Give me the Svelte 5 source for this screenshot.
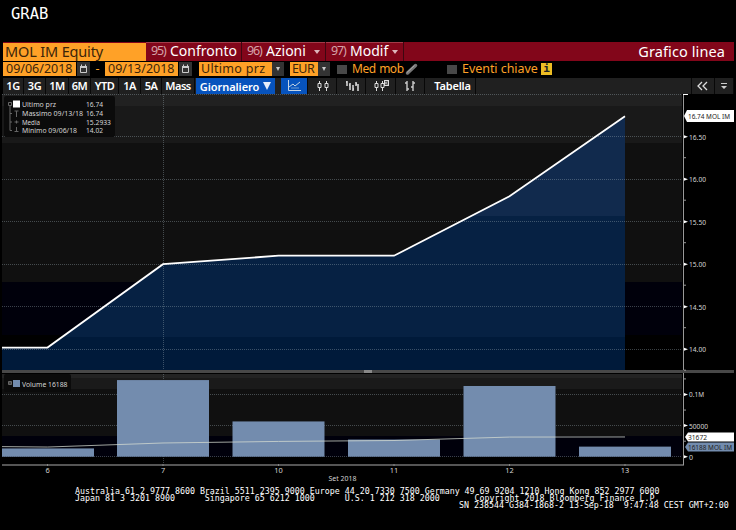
<script lang="ts">
  type Point = { day: string; x: number; price: number; volume: number; average: number };

  const points: Point[] = [
    { day: '6', x: 47.5, price: 14.02, volume: 13300, average: 15500 },
    { day: '7', x: 163, price: 15.0, volume: 123000, average: 22000 },
    { day: '10', x: 278.5, price: 15.1, volume: 56600, average: 24500 },
    { day: '11', x: 394, price: 15.1, volume: 27500, average: 26000 },
    { day: '12', x: 509.5, price: 15.8, volume: 113500, average: 31500 },
    { day: '13', x: 625, price: 16.74, volume: 16188, average: 31672 },
  ];

  const ranges = [
    { label: '1G', width: 21 },
    { label: '3G', width: 22 },
    { label: '1M', width: 23 },
    { label: '6M', width: 22 },
    { label: 'YTD', width: 28 },
    { label: '1A', width: 22 },
    { label: '5A', width: 21 },
    { label: 'Mass', width: 33 },
  ];

  const menus = [
    { key: '95)', label: 'Confronto', width: 96, arrow: false },
    { key: '96)', label: 'Azioni', width: 84, arrow: true },
    { key: '97)', label: 'Modif', width: 78, arrow: true },
  ];

  const stats = [
    { label: 'Ultimo prz', value: '16.74', width: 34, valueWidth: 17 },
    { label: 'Massimo 09/13/18', value: '16.74', width: 61, valueWidth: 17 },
    { label: 'Media', value: '15.2933', width: 18, valueWidth: 25 },
    { label: 'Minimo 09/06/18', value: '14.02', width: 55, valueWidth: 17 },
  ];

  const priceTicks = [16.5, 16, 15.5, 15, 14.5, 14];
  const volumeTicks = [
    { value: 100000, label: '0.1M', width: 15 },
    { value: 50000, label: '50000', width: 19 },
    { value: 0, label: '0', width: 4 },
  ];

  const priceY = (value: number) => 42.7 + (16.5 - value) * 85;
  const volumeY = (value: number) => 362.7 - value * 0.000623;

  const pricePath = 'M2 253.6 ' + points.map((p) => `L${p.x} ${priceY(p.price)}`).join(' ');
  const areaPath = pricePath + ' V276 H2 Z';
  const averagePath = 'M2 352.6 ' + points.map((p) => `L${p.x} ${volumeY(p.average)}`).join(' ');
</script>

{#snippet calendar()}
  <span class="calendar">
    <svg width="13" height="14" viewBox="0 0 13 14">
      <path d="M3.500 4.500h6v6h-6z" fill="none" stroke="#ccc" />
      <path d="M3 4h7v2H3zM4 2.500h1V4H4zM8 2.500h1V4H8z" fill="#ccc" />
    </svg>
  </span>
{/snippet}

<div class="terminal">
  <div class="command">GRAB</div>

  <header class="title">
    <span class="ticker">MOL IM Equity</span>
    {#each menus as menu}
      <span class="menu" style:width="{menu.width}px">
        <span class="key">{menu.key}</span>
        <span class="name">{menu.label}</span>
        {#if menu.arrow}<i></i>{/if}
      </span>
    {/each}
    <span class="function">Grafico linea</span>
  </header>

  <div class="filters">
    <span class="date">09/06/2018</span>
    {@render calendar()}
    <span class="dash">-</span>
    <span class="date">09/13/2018</span>
    {@render calendar()}
    <span class="select price">Ultimo prz</span>
    <span class="drop"></span>
    <span class="select currency">EUR</span>
    <span class="drop"></span>
    <span class="check"></span>
    <span class="label average">Med mob</span>
    <svg class="pencil" width="15" height="14" viewBox="0 0 15 14">
      <path d="M3.500 11 11.500 3.500" stroke="#777" stroke-width="3.500" stroke-linecap="round" />
      <path d="M3 10.500 10.500 3.500" stroke="#aaa" stroke-width="1" />
    </svg>
    <span class="check second"></span>
    <span class="label events">Eventi chiave</span>
    <span class="info">i</span>
  </div>

  <nav class="toolbar">
    {#each ranges as range}
      <span class="range" style:width="{range.width}px">{range.label}</span>
    {/each}
    <span class="period">Giornaliero <i></i></span>
    <span class="tool active">
      <svg width="26" height="16" fill="none" stroke="#c5d4e4">
        <path d="M7.500 2v10.500H20" /><path d="m8 9 4-3 2 2 5-4" /><path d="M10 10h8" stroke="#6f9bd0" />
      </svg>
    </span>
    <span class="tool">
      <svg width="28" height="16" fill="none" stroke="#ddd">
        <path d="M11.500 3v2m0 5v3M18.500 3v2m0 5v3M10 5.500h3v4h-3zM17 5.500h3v4h-3z" />
      </svg>
    </span>
    <span class="tool">
      <svg width="28" height="16" fill="none" stroke="#ddd" stroke-width="1.500">
        <path d="M10 3v5M13 5v7M16 7v6M19 4v4M21 6v7" /><path d="M9 4h1M12 7h1M16 11h1M19 6h1" />
      </svg>
    </span>
    <span class="tool">
      <svg width="29" height="16" fill="none" stroke="#ddd">
        <path d="M10.500 3v2m0 5v3M16.500 3v2m0 5v3M9 5.500h3v4H9zM15 5.500h3v4h-3z" />
        <path d="M18 2h5v6h-5z" fill="#ddd" stroke="none" /><path d="M19 3.500h2.500v3H19M19 5h2" stroke="#333" stroke-width=".8" />
      </svg>
    </span>
    <span class="tool">
      <svg width="28" height="16" fill="none" stroke="#ccc" stroke-width="1.400">
        <path d="M11 3v10M9 5h2M11 11h2M17 3v10M15 9h2M17 5h2" />
      </svg>
    </span>
    <span class="table">Tabella</span>
    <span class="space"></span>
    <span class="tool">
      <svg width="22" height="16" fill="none" stroke="#ddd" stroke-width="1.300">
        <path d="m10 4-4 4 4 4M15 4l-4 4 4 4" />
      </svg>
    </span>
    <span class="tool">
      <svg width="18" height="16"><path d="M6 5h6v1H6zM6 8h6l-3 3z" fill="#ccc" /></svg>
    </span>
  </nav>

  <svg class="chart" width="736" height="391" viewBox="0 0 736 391">
    <g class="bands" shape-rendering="crispEdges">
      <rect x="2" y="0" width="680" height="12" fill="#212121" />
      <rect x="2" y="12" width="680" height="37" fill="#191919" />
      <rect x="2" y="49" width="680" height="139" fill="#101010" />
      <rect x="2" y="188" width="680" height="53" fill="#00000b" />
      <rect x="2" y="280" width="680" height="4" fill="#232323" />
      <rect x="2" y="284" width="680" height="11" fill="#1a1a1a" />
      <rect x="2" y="295" width="680" height="47" fill="#101010" />
      <rect x="2" y="342" width="680" height="21" fill="#00000b" />
    </g>

    <clipPath id="area"><path d={areaPath} /></clipPath>
    <g clip-path="url(#area)">
      <rect width="626" height="122" fill="#112a4d" />
      <rect y="122" width="626" height="121" fill="#062143" />
      <rect y="243" width="626" height="34" fill="#001a3a" />
    </g>

    <g class="grid">
      <path d="M2 .5H682" />
      {#each priceTicks as tick}
        <path d="M2 {Math.floor(priceY(tick)) + 0.5}H682" />
      {/each}
      {#each volumeTicks as tick}
        <path d="M2 {Math.floor(volumeY(tick.value)) + 0.5}H682" />
      {/each}
      <path d="M163.5 0V371" />
    </g>

    <path d={pricePath} fill="none" stroke="#fff" stroke-width="1.8" />

    {#each points as point, i}
      <rect
        x={i === 0 ? 2 : point.x - 46}
        y={volumeY(point.volume)}
        width="92"
        height={volumeY(0) - volumeY(point.volume)}
        fill="#738cae"
      />
    {/each}
    <path d={averagePath} fill="none" stroke="#d5dcd2" stroke-opacity=".75" />

    <rect x="2" y="276" width="732" height="3" fill="#484848" />
    <rect x="364" y="276" width="8" height="3" fill="#888" />
    <path d="M2 371H684" stroke="#555" stroke-width="2" />
    <path d="M683.5 0V276M683.5 279V371" stroke="#999" />
    <path d="M683 .5h5" stroke="#fff" />

    <g class="axis">
      {#each priceTicks as tick}
        <path d="M684 {priceY(tick) - 1.5}l4 1.5-4 1.5z" fill="#fff" />
        <path d="M684 {priceY(tick) + 21}h2" stroke="#999" />
        <text x="689" y={priceY(tick) + 3} textLength="17" lengthAdjust="spacingAndGlyphs">{tick.toFixed(2)}</text>
      {/each}
      {#each volumeTicks as tick}
        <path d="M684 {volumeY(tick.value) - 1.5}l4 1.5-4 1.5z" fill="#fff" />
        <path d="M684 {volumeY(tick.value) - 15.5}h2" stroke="#999" />
        <text x="689" y={volumeY(tick.value) + 3} textLength={tick.width} lengthAdjust="spacingAndGlyphs">{tick.label}</text>
      {/each}
      {#each points as point}
        <path d="M{point.x} 370v2" stroke="#888" />
        <text x={point.x} y="379" text-anchor="middle">{point.day}</text>
      {/each}
      <text x="328.500" y="387" textLength="28" lengthAdjust="spacingAndGlyphs">Set 2018</text>
    </g>

    <g class="flags">
      <path d="M684 22l3-6h47v12h-47z" fill="#fff" />
      <text x="688" y="25" textLength="42" lengthAdjust="spacingAndGlyphs">16.74 MOL IM</text>
      <path d="M685 343l3-4.500h46v9h-46z" fill="#fff" />
      <text x="688" y="346" textLength="19" lengthAdjust="spacingAndGlyphs">31672</text>
      <path d="M685 353l3-4.500h46v9h-46z" fill="#738cae" />
      <text x="688" y="356" textLength="44" lengthAdjust="spacingAndGlyphs">16188 MOL IM</text>
    </g>

    <g class="legend">
      <rect x="4" y="2" width="111" height="41" rx="2" fill="#0b0b0b" />
      <rect x="13" y="6.500" width="7" height="7" fill="#fff" />
      <path d="M8.500 8.500h3v3h-3zM10 12v24.500h2M10 19.500h2M10 28h2M14.500 17h4M16.500 17v6M14.500 28h4M16.500 26.500v3M16.500 33v5M14.500 37.500h4" fill="none" stroke="#666" />
      {#each stats as stat, i}
        <text x="22" y={13.3 + i * 8.7} textLength={stat.width} lengthAdjust="spacingAndGlyphs">{stat.label}</text>
        <text x="86" y={13.3 + i * 8.7} textLength={stat.valueWidth} lengthAdjust="spacingAndGlyphs">{stat.value}</text>
      {/each}
      <rect x="4" y="280" width="67" height="18" rx="2" fill="#0b0b0b" />
      <path d="M8.500 287.500h3v3h-3z" fill="#444" stroke="#666" />
      <rect x="13" y="286" width="7" height="7" fill="#738cae" />
      <text x="22" y="292.500" textLength="45.500" lengthAdjust="spacingAndGlyphs">Volume 16188</text>
    </g>
  </svg>

  <footer>
    <pre>Australia 61 2 9777 8600 Brazil 5511 2395 9000 Europe 44 20 7330 7500 Germany 49 69 9204 1210 Hong Kong 852 2977 6000
Japan 81 3 3201 8900      Singapore 65 6212 1000      U.S. 1 212 318 2000       Copyright 2018 Bloomberg Finance L.P.</pre>
    <pre class="serial">SN 238544 G384-1868-2 13-Sep-18  9:47:48 CEST GMT+2:00</pre>
  </footer>
</div>

<style>
  :global(body) {
    background: #000;
    overflow: hidden;
  }

  .terminal {
    width: 736px;
    height: 530px;
    background: #000;
    color: #fff;
    font-family: 'Noto Sans', sans-serif;
    white-space: nowrap;
  }

  svg {
    display: block;
  }

  .command {
    height: 42px;
    padding: 4px 0 0 11px;
    box-sizing: border-box;
    font: 15.5px/20px 'DejaVu Sans Mono', monospace;
  }

  .title {
    display: flex;
    width: 731px;
    height: 19px;
    margin-left: 3px;
    background: #82061a;
  }

  .ticker {
    width: 143px;
    height: 18px;
    margin-top: 1px;
    padding-left: 2px;
    box-sizing: border-box;
    background: #ffa127;
    color: #3c2509;
    font-size: 14.5px;
    line-height: 17px;
    letter-spacing: -0.15px;
  }

  .menu {
    display: flex;
    padding-left: 5px;
    border-right: 1px solid #3d0710;
    box-shadow: inset 0 1px #a33b49;
    box-sizing: border-box;
    line-height: 18px;
  }

  .key {
    width: 19px;
    color: #d5a2a8;
    font-size: 12.5px;
    letter-spacing: -1.1px;
  }

  .name {
    font-size: 14px;
  }

  .menu i {
    margin: 8px 5px 0 auto;
    border: 3px solid transparent;
    border-top: 4px solid #ddb6bb;
    border-bottom: 0;
    height: 0;
  }

  .function {
    margin-left: auto;
    padding-right: 9px;
    font-size: 14.5px;
    line-height: 18px;
    letter-spacing: 0.1px;
  }

  .filters {
    display: flex;
    height: 14px;
    margin: 1px 0 0 3px;
    color: #ffa127;
    font-size: 12.5px;
    line-height: 14px;
  }

  .date,
  .select {
    background: #ffa127;
    color: #3c2509;
    padding-left: 2px;
    box-sizing: border-box;
  }

  .date {
    width: 73px;
    padding-left: 3px;
  }

  .calendar {
    width: 13px;
    margin-left: 1px;
    background: #333;
  }

  .dash {
    width: 15px;
    text-align: center;
  }

  .price {
    width: 73px;
    margin-left: 7px;
    letter-spacing: 0.3px;
  }

  .currency {
    width: 28px;
    margin-left: 6px;
    letter-spacing: -0.6px;
  }

  .drop {
    display: grid;
    width: 12px;
    place-items: center;
    background: #333;
  }

  .drop::before {
    content: '';
    border: 2.5px solid transparent;
    border-top: 4px solid #ccc;
    border-bottom: 0;
  }

  .check {
    width: 10px;
    height: 9px;
    margin: 3px 5px 0 7px;
    background: #484848;
  }

  .average {
    width: 52px;
    font-size: 12px;
    letter-spacing: -0.5px;
    word-spacing: 1px;
  }

  .check.second {
    margin-left: 28px;
  }

  .events {
    width: 79px;
    letter-spacing: -0.05px;
  }

  .info {
    width: 11px;
    height: 12px;
    margin-top: 1px;
    background: #edbd24;
    color: #222;
    font: bold 11px/12px 'DejaVu Sans Mono', monospace;
    text-align: center;
  }

  .toolbar {
    display: flex;
    height: 16px;
    margin: 2px 2px 0 3px;
    background: #202020;
    font-size: 11px;
    font-weight: 600;
    line-height: 15px;
    text-align: center;
  }

  .range,
  .tool,
  .table {
    border-right: 1px solid #080808;
    box-sizing: border-box;
  }

  .tool {
    box-sizing: content-box;
  }

  .range {
    letter-spacing: -0.5px;
  }

  .period {
    display: flex;
    width: 79px;
    justify-content: center;
    align-items: center;
    gap: 4px;
    margin-left: 1px;
    margin-right: 6px;
    background: #0753bd;
    letter-spacing: -0.05px;
  }

  .period i {
    border: 4px solid transparent;
    border-top: 8px solid #e6eefb;
    border-bottom: 0;
  }

  .active {
    background: #0753bd;
  }

  .table {
    width: 46px;
    margin-left: 5px;
    letter-spacing: -0.2px;
  }

  .space {
    flex: 1;
    border-right: 1px solid #080808;
  }

  .chart text {
    font-size: 7.4px;
  }

  .grid path {
    stroke: #a4b5bd;
    stroke-opacity: 0.36;
    stroke-dasharray: 1 1;
  }

  .axis text,
  .legend text {
    fill: #d4d4d4;
  }

  .chart .flags text {
    font-size: 7px;
    fill: #222;
  }

  footer {
    padding-top: 3px;
  }

  pre {
    margin: 0 0 0 75px;
    font: 8.31px/7px 'DejaVu Sans Mono', monospace;
  }

  .serial {
    margin-left: 459px;
  }
</style>
